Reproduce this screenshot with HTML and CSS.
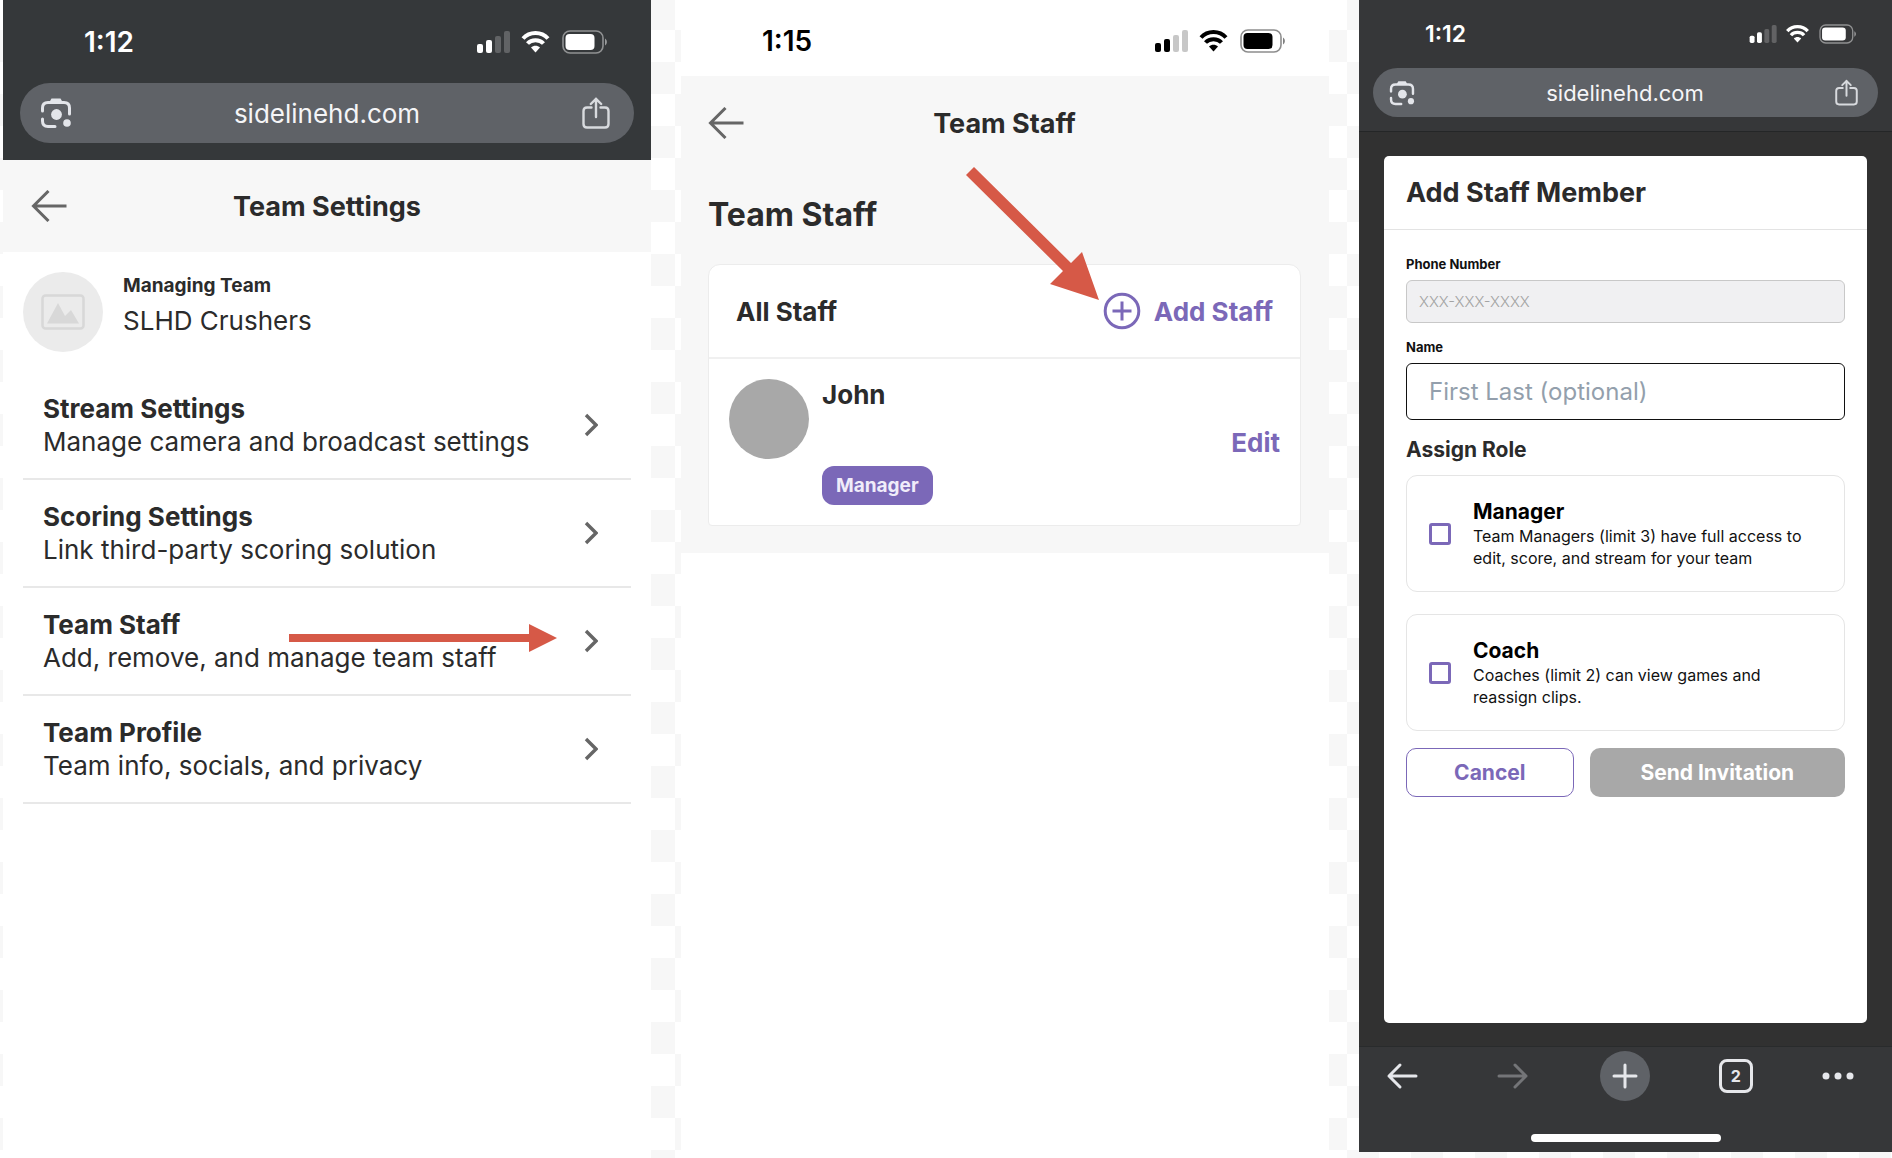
FILE: index.html
```
<!DOCTYPE html>
<html lang="en">
<head>
  <meta charset="UTF-8" />
  <title>Team Staff</title>
  <meta name="viewport" content="width=device-width, initial-scale=1.0" />
  <link rel="stylesheet" href="styles.css">
</head>
<body>

  <!-- Shared icons -->
  <svg class="sprite" aria-hidden="true">
    <symbol id="status-icons" viewBox="0 0 132 24">
      <rect x="2" y="14" width="6" height="9" rx="2" fill="currentColor"/>
      <rect x="11" y="10" width="6" height="13" rx="2" fill="currentColor"/>
      <rect x="20" y="6" width="6" height="17" rx="2" fill="currentColor" opacity="0.22"/>
      <rect x="29" y="1" width="6" height="22" rx="2" fill="currentColor" opacity="0.22"/>
      <g fill="none" stroke="currentColor" stroke-width="4">
        <path d="M48 8.500 C54.500 1.200 66.500 1.200 73 8.500"/>
        <path d="M52.500 13.500 C56.500 9 64.500 9 68.500 13.500"/>
      </g>
      <path d="M56 17.500 C58.500 15 62.500 15 65 17.500 L60.500 22.500 Z" fill="currentColor"/>
      <rect x="88" y="1" width="40" height="22" rx="7" fill="none" stroke="currentColor" stroke-width="1.600" opacity="0.45"/>
      <rect x="90.500" y="4" width="29" height="16" rx="4" fill="currentColor"/>
      <path d="M130 8.500 C132.500 10 132.500 14 130 15.500 Z" fill="currentColor" opacity="0.5"/>
    </symbol>
    <symbol id="lens" viewBox="0 0 32 32">
      <g fill="none" stroke="currentColor" stroke-width="3" stroke-linecap="round">
        <path d="M2.500 14 V11 Q2.500 5.500 8 5.500 H24 Q29.500 5.500 29.500 11 V17"/>
        <path d="M2.500 22 V24 Q2.500 29.500 8 29.500 H15"/>
      </g>
      <path d="M9.500 5 L11.500 1.500 H20.500 L22.500 5 Z" fill="currentColor"/>
      <circle cx="16.500" cy="17.500" r="5.400" fill="currentColor"/>
      <circle cx="27" cy="26" r="3.800" fill="currentColor"/>
    </symbol>
    <symbol id="share" viewBox="0 0 28 32">
      <g fill="none" stroke="currentColor" stroke-width="2.400" stroke-linecap="round" stroke-linejoin="round">
        <path d="M9.500 10.500 H5 Q1.500 10.500 1.500 14 V27 Q1.500 30.500 5 30.500 H23 Q26.500 30.500 26.500 27 V14 Q26.500 10.500 23 10.500 H18.500"/>
        <path d="M14 20 V1.800 M8.800 7 L14 1.800 L19.200 7"/>
      </g>
    </symbol>
    <symbol id="back" viewBox="0 0 36 32">
      <path d="M35.500 16 H2 M17.500 1 L2.500 16 L17.500 31" fill="none" stroke="currentColor" stroke-width="3"/>
    </symbol>
    <symbol id="chevron" viewBox="0 0 14 24">
      <path d="M2 2 L12 12 L2 22" fill="none" stroke="currentColor" stroke-width="3.400"/>
    </symbol>
  </svg>

  <div class="screens">

    <!-- Team settings -->
    <section class="phone">
      <div class="browser">
        <div class="status">
          <span class="time">1:12</span>
          <svg class="status-icons"><use href="#status-icons"/></svg>
        </div>
        <div class="url-bar">
          <svg class="lens"><use href="#lens"/></svg>
          <span>sidelinehd.com</span>
          <svg class="share"><use href="#share"/></svg>
        </div>
      </div>

      <header class="page-header">
        <button class="back" type="button" aria-label="Back"><svg><use href="#back"/></svg></button>
        <h1>Team Settings</h1>
      </header>

      <div class="team">
        <div class="team-logo">
          <svg viewBox="0 0 44 36">
            <rect x="1.500" y="1.500" width="41" height="33" rx="3" fill="none" stroke="currentColor" stroke-width="2.500"/>
            <path d="M6 29.500 L17 9 L24 22 L30 16 L38 29.500 Z" fill="currentColor"/>
          </svg>
        </div>
        <div>
          <div class="team-label">Managing Team</div>
          <div class="team-name">SLHD Crushers</div>
        </div>
      </div>

      <nav class="settings">
        <a href="#">
          <span><strong>Stream Settings</strong>Manage camera and broadcast settings</span>
          <svg class="chevron"><use href="#chevron"/></svg>
        </a>
        <a href="#">
          <span><strong>Scoring Settings</strong>Link third-party scoring solution</span>
          <svg class="chevron"><use href="#chevron"/></svg>
        </a>
        <a href="#">
          <span><strong>Team Staff</strong>Add, remove, and manage team staff</span>
          <svg class="chevron"><use href="#chevron"/></svg>
          <svg class="arrow-right" viewBox="0 0 268 28">
            <path d="M0 10 H240 V0 L268 14 L240 28 V18 H0 Z"/>
          </svg>
        </a>
        <a href="#">
          <span><strong>Team Profile</strong>Team info, socials, and privacy</span>
          <svg class="chevron"><use href="#chevron"/></svg>
        </a>
      </nav>
    </section>

    <!-- Team staff -->
    <section class="phone">
      <div class="status light">
        <span class="time">1:15</span>
        <svg class="status-icons"><use href="#status-icons"/></svg>
      </div>

      <div class="staff-page">
        <header class="page-header">
          <button class="back" type="button" aria-label="Back"><svg><use href="#back"/></svg></button>
          <h1>Team Staff</h1>
        </header>

        <h2>Team Staff</h2>

        <div class="staff-card">
          <div class="staff-head">
            <h3>All Staff</h3>
            <button class="add-staff" type="button">
              <svg viewBox="0 0 38 38">
                <circle cx="19" cy="19" r="16.800"/>
                <path d="M19 9.500 V28.500 M9.500 19 H28.500"/>
              </svg>
              Add Staff
            </button>
            <svg class="arrow-diagonal" viewBox="0 0 134 133">
              <path d="M8 0 L105 96 L116 85 L133 133 L84 117 L97 104 L0 8 Z"/>
            </svg>
          </div>
          <div class="staff-row">
            <div class="avatar"></div>
            <div class="staff-info">
              <strong>John</strong>
              <span class="badge">Manager</span>
            </div>
            <button class="edit" type="button">Edit</button>
          </div>
        </div>
      </div>
    </section>

    <!-- Add staff member -->
    <section class="phone small">
      <div class="browser">
        <div class="status">
          <span class="time">1:12</span>
          <svg class="status-icons"><use href="#status-icons"/></svg>
        </div>
        <div class="url-bar">
          <svg class="lens"><use href="#lens"/></svg>
          <span>sidelinehd.com</span>
          <svg class="share"><use href="#share"/></svg>
        </div>
      </div>

      <div class="backdrop">
        <div class="modal" role="dialog" aria-labelledby="modal-title">
          <h2 id="modal-title">Add Staff Member</h2>
          <form>
            <label class="field-label" for="phone">Phone Number</label>
            <input class="phone-input" id="phone" type="tel" placeholder="XXX-XXX-XXXX">

            <label class="field-label" for="name">Name</label>
            <input class="name-input" id="name" type="text" placeholder="First Last (optional)">

            <h3>Assign Role</h3>
            <label class="role">
              <input type="checkbox" name="manager">
              <span><strong>Manager</strong>Team Managers (limit 3) have full access to edit, score, and stream for your team</span>
            </label>
            <label class="role">
              <input type="checkbox" name="coach">
              <span><strong>Coach</strong>Coaches (limit 2) can view games and reassign clips.</span>
            </label>

            <div class="actions">
              <button class="cancel" type="button">Cancel</button>
              <button class="send" type="submit" disabled>Send Invitation</button>
            </div>
          </form>
        </div>
      </div>

      <div class="toolbar">
        <nav>
          <button type="button" aria-label="Back">
            <svg width="32" height="28" viewBox="0 0 32 28"><path d="M30 14 H3 M14 3 L3 14 L14 25"/></svg>
          </button>
          <button class="dim" type="button" aria-label="Forward">
            <svg width="32" height="28" viewBox="0 0 32 28"><path d="M2 14 H29 M18 3 L29 14 L18 25"/></svg>
          </button>
          <button class="new-tab" type="button" aria-label="New tab">
            <svg width="26" height="26" viewBox="0 0 26 26"><path d="M13 2 V24 M2 13 H24"/></svg>
          </button>
          <button type="button" aria-label="Tabs"><span class="tab-count">2</span></button>
          <button class="more" type="button" aria-label="More">
            <svg width="32" height="8" viewBox="0 0 32 8">
              <circle cx="4" cy="4" r="3.500"/><circle cx="16" cy="4" r="3.500"/><circle cx="28" cy="4" r="3.500"/>
            </svg>
          </button>
        </nav>
        <div class="home-indicator"></div>
      </div>
    </section>

  </div>

</body>
</html>
```
FILE: styles.css
```
* {
  box-sizing: border-box;
}

body {
  margin: 0;
  font-family: Inter, "Open Sans", sans-serif;
  color: #2b2b2b;
  background: repeating-conic-gradient(#f7f7f7 0 25%, #fff 0 50%) 3px 30px / 64px 64px;
}

h1, h2, h3 {
  margin: 0;
  font-weight: 700;
}

button {
  padding: 0;
  border: none;
  background: none;
  font-family: inherit;
  font-weight: 700;
  color: #7b68b8;
  cursor: pointer;
}

input {
  font-family: inherit;
}

strong {
  font-weight: 700;
}

.sprite {
  display: none;
}

.screens {
  display: grid;
  grid-template-columns: 648fr 648fr 533fr;
  gap: 30px;
  min-height: 100vh;
  padding-left: 3px;
}

.phone {
  display: flex;
  flex-direction: column;
  background: #fff;
}

/* Status and address bars */
.browser {
  padding: 0 17px 17px;
  background: #35383a;
  color: #fff;
}

.status {
  display: flex;
  align-items: center;
  justify-content: space-between;
  height: 83px;
  padding: 0 27px 0 64px;
}

.status.light {
  height: 76px;
  padding: 6px 44px 0 81px;
  color: #000;
}

.time {
  font-size: 28px;
  font-weight: 600;
}

.status-icons {
  width: 132px;
  height: 24px;
}

.url-bar {
  display: flex;
  align-items: center;
  justify-content: space-between;
  height: 60px;
  padding: 0 24px 0 20px;
  border-radius: 30px;
  background: #5f6267;
  font-size: 26px;
  color: #f5f5f7;
}

.lens {
  width: 32px;
  height: 32px;
  color: #e3e5ea;
}

.share {
  width: 28px;
  height: 32px;
  color: #d8dade;
}

/* Page header */
.page-header {
  display: grid;
  grid-template-columns: 1fr auto 1fr;
  align-items: center;
  height: 92px;
  padding: 0 28px;
  background: #f7f7f7;
}

.page-header h1 {
  font-size: 27px;
}

.back {
  justify-self: start;
  display: flex;
  color: #666;
}

.back svg {
  width: 36px;
  height: 32px;
}

/* Team settings */
.team {
  display: flex;
  gap: 20px;
  padding: 20px;
}

.team-logo {
  display: flex;
  align-items: center;
  justify-content: center;
  width: 80px;
  height: 80px;
  border-radius: 50%;
  background: #ebebeb;
  color: #d8d8d8;
}

.team-logo svg {
  width: 44px;
  height: 36px;
}

.team-label {
  font-size: 19px;
  font-weight: 700;
  line-height: 28px;
}

.team-name {
  font-size: 26px;
  line-height: 42px;
}

.settings {
  padding: 0 20px;
}

.settings a {
  position: relative;
  display: flex;
  align-items: center;
  justify-content: space-between;
  height: 108px;
  padding: 0 33px 0 20px;
  border-bottom: 2px solid #e8e8e8;
  font-size: 26px;
  line-height: 33px;
  color: inherit;
  text-decoration: none;
}

.settings strong {
  display: block;
}

.chevron {
  width: 14px;
  height: 24px;
  color: #666;
}

.arrow-right {
  position: absolute;
  top: 36px;
  right: 74px;
  width: 268px;
  height: 28px;
  fill: #d65947;
}

/* Team staff */
.staff-page {
  padding: 0 28px 27px 27px;
  background: #f7f7f7;
}

.staff-page .page-header {
  height: 94px;
  padding: 0;
}

.staff-page h2 {
  margin: 25px 0 29px;
  font-size: 32px;
  line-height: 40px;
}

.staff-card {
  border: 1px solid #ececec;
  border-radius: 12px 12px 4px 4px;
  background: #fff;
}

.staff-head {
  position: relative;
  display: flex;
  align-items: center;
  justify-content: space-between;
  height: 94px;
  padding: 0 27px;
  border-bottom: 2px solid #f0f0f0;
}

.staff-head h3 {
  font-size: 26px;
}

.add-staff {
  display: flex;
  align-items: center;
  gap: 13px;
  font-size: 26px;
}

.add-staff svg {
  width: 38px;
  height: 38px;
  fill: none;
  stroke: currentColor;
  stroke-width: 3;
}

.arrow-diagonal {
  position: absolute;
  right: 200px;
  bottom: 57px;
  width: 134px;
  height: 133px;
  fill: #d65947;
}

.staff-row {
  display: flex;
  align-items: center;
  gap: 13px;
  padding: 20px;
}

.avatar {
  align-self: flex-start;
  width: 80px;
  height: 80px;
  border-radius: 50%;
  background: #a8a8a8;
}

.staff-info {
  display: flex;
  flex: 1;
  flex-direction: column;
  align-items: flex-start;
  gap: 55px;
  font-size: 26px;
  line-height: 32px;
}

.badge {
  padding: 0 14px;
  border-radius: 12px;
  background: #7b68b8;
  font-size: 19px;
  font-weight: 700;
  line-height: 39px;
  color: #f0ecfa;
}

.edit {
  font-size: 26px;
}

/* Add staff member */
.phone.small {
  margin-bottom: 6px;
}

.small .browser {
  padding: 0 14px 14px;
  border-bottom: 1px solid #242627;
  background: #363739;
}

.small .status {
  height: 68px;
  padding: 0 22px 0 52px;
}

.small .time {
  font-size: 23px;
}

.small .status-icons {
  width: 108px;
  height: 20px;
}

.small .url-bar {
  height: 49px;
  padding: 0 20px 0 16px;
  font-size: 22px;
}

.small .lens {
  width: 26px;
  height: 26px;
}

.small .share {
  width: 23px;
  height: 27px;
}

.backdrop {
  display: flex;
  flex: 1;
  padding: 24px 25px 23px;
  background: #313131;
}

.modal {
  flex: 1;
  border-radius: 5px;
  background: #fff;
}

.modal h2 {
  padding: 0 22px;
  border-bottom: 1px solid #e3e3e3;
  font-size: 27px;
  line-height: 73px;
}

.modal form {
  padding: 25px 22px;
}

.field-label {
  display: block;
  margin-bottom: 7px;
  font-size: 13px;
  font-weight: 700;
  line-height: 18px;
  color: #111;
}

.phone-input,
.name-input {
  display: block;
  width: 100%;
  border-radius: 6px;
}

.phone-input {
  height: 43px;
  margin-bottom: 15px;
  padding: 0 12px;
  border: 1px solid #c8c8c8;
  background: #f0f0f2;
  font-size: 15px;
  font-weight: 300;
}

.phone-input::placeholder {
  color: #a3a3a3;
}

.name-input {
  height: 57px;
  padding: 0 22px;
  border: 1px solid #111;
  font-size: 24px;
}

.name-input::placeholder {
  color: #939fac;
}

.modal h3 {
  margin: 16px 0 11px;
  font-size: 21px;
  line-height: 28px;
}

.role {
  display: flex;
  align-items: center;
  gap: 22px;
  height: 117px;
  margin-bottom: 22px;
  padding: 0 22px;
  border: 1px solid #e5e5e5;
  border-radius: 11px;
  font-size: 16px;
  line-height: 22px;
  color: #111;
}

.role + .role {
  margin-bottom: 17px;
}

.role input {
  appearance: none;
  flex: none;
  width: 22px;
  height: 22px;
  margin: 0;
  border: 3px solid #7b68b8;
  border-radius: 3px;
}

.role strong {
  display: block;
  font-size: 21px;
  line-height: 26px;
  color: #000;
}

.actions {
  display: grid;
  grid-template-columns: 168fr 256fr;
  gap: 16px;
}

.actions button {
  height: 49px;
  border-radius: 10px;
  font-size: 21px;
}

.cancel {
  border: 1px solid #7b68b8;
}

.actions .send {
  background: #a8a8a8;
  color: #fff;
}

/* Browser toolbar */
.toolbar {
  padding-top: 4px;
  border-top: 1px solid #292b2c;
  background: #363739;
}

.toolbar nav {
  display: flex;
  justify-content: space-between;
  padding: 0 20px 0 18px;
}

.toolbar button {
  display: flex;
  align-items: center;
  justify-content: center;
  width: 50px;
  height: 50px;
  color: #e6e7eb;
}

.toolbar svg {
  fill: none;
  stroke: currentColor;
  stroke-width: 3;
  stroke-linecap: round;
  stroke-linejoin: round;
}

.toolbar .dim {
  color: #747578;
}

.toolbar .new-tab {
  border-radius: 50%;
  background: #5f6267;
}

.toolbar .more {
  justify-content: flex-start;
}

.toolbar .more svg {
  fill: currentColor;
  stroke: none;
}

.tab-count {
  width: 34px;
  height: 34px;
  border: 3px solid currentColor;
  border-radius: 8px;
  font-size: 16px;
  line-height: 28px;
}

.home-indicator {
  width: 190px;
  height: 8px;
  margin: 33px auto 10px;
  border-radius: 4px;
  background: #fff;
}
```
